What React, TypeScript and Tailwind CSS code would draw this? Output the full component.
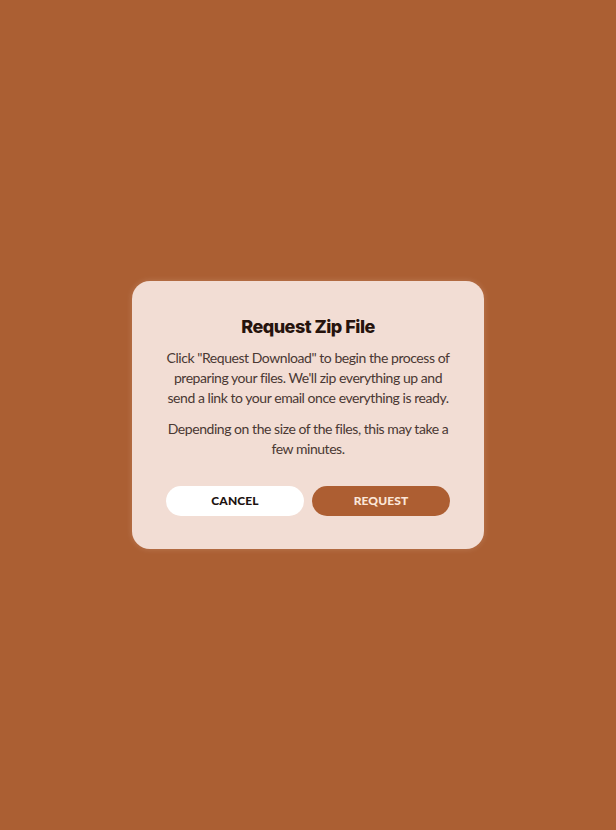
import React from "react";

export default function App() {
  return (
    <div className="min-h-screen w-full bg-[#ab5f33] flex items-center justify-center font-['Lato',sans-serif]">
      <div className="w-[352px] rounded-[18px] bg-[#f2ddd4] px-[20px] pt-[34px] pb-[33px] text-center shadow-[0_0_6px_rgba(255,230,220,0.2)]">
        <h2 className="font-['Inter',sans-serif] text-[18px] font-extrabold leading-6 text-[#26130d] tracking-[-0.5px]">Request Zip File</h2>
        <p className="mt-[9px] text-[14px] leading-5 text-[#4a3833] tracking-[-0.45px] whitespace-nowrap">
          Click "Request Download" to begin the process of
          <br />
          preparing your files. We'll zip everything up and
          <br />
          send a link to your email once everything is ready.
        </p>
        <p className="mt-[11px] text-[14px] leading-5 text-[#4a3833] tracking-[-0.45px] whitespace-nowrap">
          Depending on the size of the files, this may take a
          <br />
          few minutes.
        </p>
        <div className="mt-[27px] flex gap-2 px-[14px]">
          <button type="button" className="h-[30px] flex-1 rounded-full bg-white text-[12px] font-black tracking-[0.1px] text-[#1c1210]">
            CANCEL
          </button>
          <button type="button" className="h-[30px] flex-1 rounded-full bg-[#ad5e32] text-[12px] font-black tracking-[0.1px] text-[#fbe6d8]">
            REQUEST
          </button>
        </div>
      </div>
    </div>
  );
}
